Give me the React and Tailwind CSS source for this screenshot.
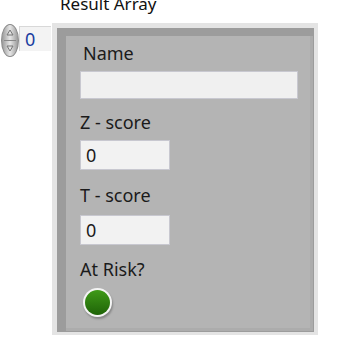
export default function App() {
  return (
    <div className="w-[363px] h-[338px] bg-white overflow-hidden font-['Noto_Sans',sans-serif] text-[#1b1b1b] relative">
      <div className="ml-[60px] mt-[-6px] h-[20px] leading-[20px] text-[17px] text-[#111]">Result Array</div>
      <div className="flex mt-[9px]">
        {/* index control */}
        <div className="flex items-start w-[52px]">
          <div className="ml-[1px] mt-[1px] w-[18px] h-[33px] rounded-[50%] bg-gradient-to-r from-[#9a9a9a] via-[#e6e6e6] to-[#9a9a9a] border border-[#8a8a8a] flex flex-col items-center justify-between py-[4px] relative">
            <svg width="8" height="7" viewBox="0 0 8 7"><path d="M4 1 L7 6 L1 6 Z" fill="none" stroke="#777" strokeWidth="1" /></svg>
            <div className="absolute left-[2px] right-[2px] top-[15px] h-px bg-[#888]" />
            <svg width="8" height="7" viewBox="0 0 8 7"><path d="M1 1 L7 1 L4 6 Z" fill="none" stroke="#777" strokeWidth="1" /></svg>
          </div>
          <div className="mt-[3px] w-[32px] h-[25px] bg-[#f3f3f3] border-t border-l border-[#d8d8d8] pl-[5px] leading-[25px] text-[18px] text-[#1a3ea0]">0</div>
        </div>
        {/* array frame */}
        <div className="w-[266px] h-[312px] bg-[#e4e4e4] pl-[5px] pt-[5px] pr-[4px] pb-[3px]">
          <div className="w-full h-full bg-[#9c9c9c] pl-[9px] pt-[8px] pr-[1px] pb-[1px]">
            <div className="w-full h-full bg-[#b4b4b4] border-r-[3px] border-b-[3px] border-[#acacac] flex flex-col pl-[14px] pt-[6px] text-[18px]">
              <div className="h-[22px] leading-[22px] pl-[3px]">Name</div>
              <div className="mt-[7px] w-[218px] h-[28px] bg-[#f0f0f0] border border-[#c8c8d0]" />
              <div className="mt-[12px] h-[22px] leading-[22px]">Z - score</div>
              <div className="mt-[7px] w-[90px] h-[30px] bg-[#f2f2f2] border border-[#c8c8d0] pl-[5px] leading-[28px]">0</div>
              <div className="mt-[14px] h-[22px] leading-[22px]">T - score</div>
              <div className="mt-[9px] w-[90px] h-[30px] bg-[#f2f2f2] border border-[#c8c8d0] pl-[5px] leading-[28px]">0</div>
              <div className="mt-[13px] h-[22px] leading-[22px]">At Risk?</div>
              <div className="mt-[8px] ml-[3px] w-[29px] h-[29px] rounded-full bg-[#f4f4f4] p-[2px] shadow-[1px_2px_2px_rgba(0,0,0,0.25)]">
                <div className="w-full h-full rounded-full bg-gradient-to-b from-[#3f9a18] to-[#1f6408]" />
              </div>
            </div>
          </div>
        </div>
      </div>
    </div>
  );
}
